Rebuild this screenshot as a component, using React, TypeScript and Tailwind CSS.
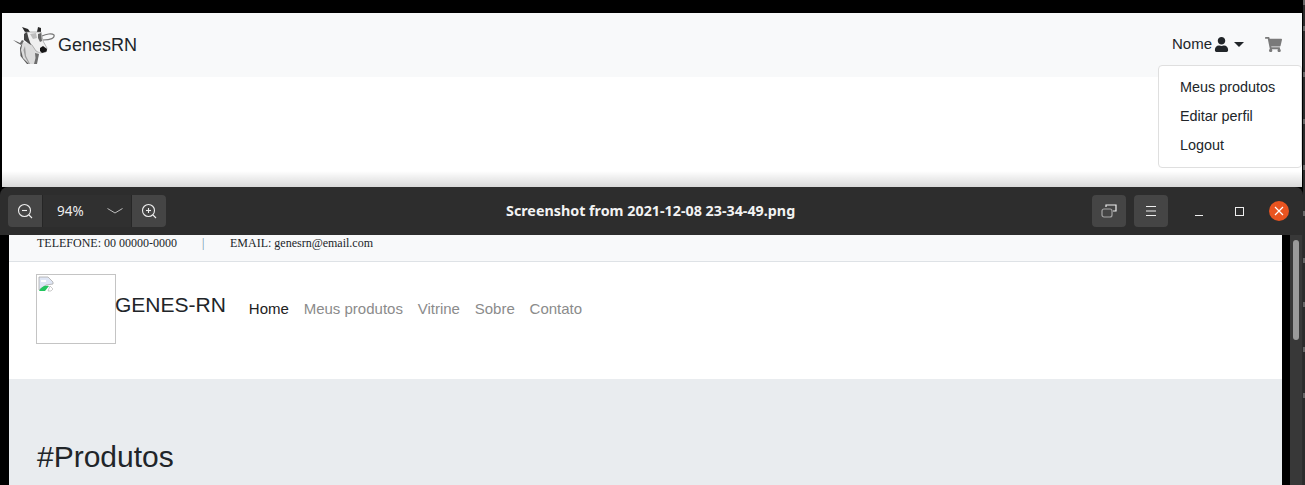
import { FaUser, FaShoppingCart } from "react-icons/fa";

const stripMarks = [26, 46, 47, 46, 46, 47, 44, 45, 46, 47];

function CowLogo() {
  return (
    <svg width="42" height="40" viewBox="0 0 42 40" className="shrink-0 blur-[0.35px]">
      {/* chifres */}
      <path d="M9 1 L15 3 L17 6 L12 6 Z" fill="#2b2b2b" />
      <path d="M25 1 L28 2 L28 7 L24 6 Z" fill="#2b2b2b" />
      {/* orelhas */}
      <path d="M0 14 C3 16 6 18 8 19 L11 15 L9 14 L7 17 C5 16 3 15 0 14 Z" fill="#666" />
      <path d="M29 10 C33 8 39 7 41 9 C42 12 38 14 30 14" fill="none" stroke="#777" strokeWidth="1.2" />
      {/* pescoço */}
      <path d="M10 16 L8 24 L10 32 L15 38 L23 38 L26 28 L20 18 Z" fill="#dcdcdc" />
      <path d="M10 15 L8 24 L10 32 L16 38 L14 38 L7.5 30 L7 22 Z" fill="#5c5c5c" />
      <path d="M12 20 L13 30 L17 38 L16 38 L12 31 L10.5 24 Z" fill="#9c9c9c" />
      <path d="M22 27 L26 28 L24 38 L21 38 L22.5 32 Z" fill="#6e6e6e" />
      {/* cabeça */}
      <path d="M12 6 L28 6 L30 15 L34 22 L33 26 L27 27 L23 25 L19 19 L14 15 Z" fill="#f0f0f0" stroke="#8a8a8a" strokeWidth="0.6" />
      <path d="M11 8 L14 6 L15.5 12 L18 19 L15 17 L11 14 Z" fill="#444444" />
      <path d="M17 8 L23 7 L24 12 L20 13 Z" fill="#bdbdbd" />
      <path d="M25 8 L28 7 L29 15 L27 16 L25 12 Z" fill="#666666" />
      <path d="M27 22 L30 20 L34 23 L33.5 25.5 L29 27 L27 25 Z" fill="#151515" />
    </svg>
  );
}

function BrokenImage() {
  return (
    <svg width="16" height="16" viewBox="0 0 16 16">
      <path d="M1 1 H10 L15 6 V8 L8 9 L1 14 Z" fill="#dfe6f5" stroke="#a9a9a9" strokeWidth="0.8" />
      <path d="M3 4 H8 V6 H3 Z" fill="#ffffff" />
      <path d="M1 15 C3 11 6 9 11 10 L7 15 Z" fill="#22c55e" />
      <path d="M12 10 L15 13 L13 15 L10 15 Z" fill="#ffffff" stroke="#a9a9a9" strokeWidth="0.6" />
    </svg>
  );
}

function ZoomIcon({ plus }: { plus?: boolean }) {
  return (
    <svg width="16" height="16" viewBox="0 0 16 16" fill="none" stroke="#eeeeee" strokeWidth="1.1">
      <circle cx="7.5" cy="7.5" r="6" />
      <path d="M12 12 L15 15" />
      <path d="M5 7.5 H10" />
      {plus && <path d="M7.5 5 V10" />}
    </svg>
  );
}

function ToolButton({ children }: { children: React.ReactNode }) {
  return (
    <div className="flex h-8 w-[34px] items-center justify-center rounded bg-[#454545]">
      {children}
    </div>
  );
}

function Viewer() {
  return (
    <div className="flex h-[298px] flex-col">
      {/* barra de título do visualizador */}
      <div className="relative flex h-[48px] shrink-0 items-center justify-between rounded-t-lg bg-[#2d2d2d] pl-2 pr-[14px] font-['Noto_Sans',sans-serif]">
        <div className="flex h-8 items-center rounded bg-[#303030]">
          <div className="flex h-8 w-[35px] items-center justify-center rounded-l border-r border-[#262626] bg-[#454545]">
            <ZoomIcon />
          </div>
          <div className="flex w-[88px] items-center pl-[14px]">
            <span className="w-[50px] text-[13.5px] text-[#eeeeee]">94%</span>
            <svg width="16" height="6" viewBox="0 0 16 6" fill="none" stroke="#bdbdbd" strokeWidth="1">
              <path d="M0.5 0.5 L8 5 L15.5 0.5" />
            </svg>
          </div>
          <div className="flex h-8 w-[35px] items-center justify-center rounded-r border-l border-[#262626] bg-[#454545]">
            <ZoomIcon plus />
          </div>
        </div>
        <span className="absolute left-[506px] text-[14.3px] font-bold text-[#f2f2f2]">
          Screenshot from 2021-12-08 23-34-49.png
        </span>
        <div className="flex items-center">
          <div className="flex gap-2">
            <ToolButton>
              <svg width="16" height="14" viewBox="0 0 16 14" fill="none" strokeWidth="1.2">
                <path d="M5 3 V1 H15 V7 H12" stroke="#eeeeee" />
                <rect x="1" y="5" width="10" height="8" rx="2" stroke="#a5a5a5" />
              </svg>
            </ToolButton>
            <ToolButton>
              <svg width="12" height="10" viewBox="0 0 12 10" stroke="#eeeeee" strokeWidth="1">
                <path d="M1 0.5 H11 M1 5 H11 M1 9.5 H11" />
              </svg>
            </ToolButton>
          </div>
          <div className="ml-[27px] mt-[8px] h-px w-2 bg-[#eeeeee]" />
          <div className="ml-[32px] h-[9px] w-[9px] border border-[#eeeeee]" />
          <div className="ml-[25px] flex h-5 w-5 items-center justify-center rounded-full bg-[#e95420]">
            <svg width="10" height="10" viewBox="0 0 10 10" stroke="#ffffff" strokeWidth="1.2">
              <path d="M1 1 L9 9 M9 1 L1 9" />
            </svg>
          </div>
        </div>
      </div>

      {/* área da imagem */}
      <div className="flex min-h-0 flex-1">
        <div className="w-[9px] shrink-0 bg-black" />
        <div className="flex w-[1273px] shrink-0 flex-col bg-white">
          <div className="flex h-[27px] shrink-0 items-start border-b border-[#dee2e6] bg-[#f8f9fa] pl-[28px] font-['Liberation_Serif',serif] text-[12px] leading-[17px] text-[#212529]">
            <span className="w-[165px]">TELEFONE: 00 00000-0000</span>
            <span className="w-[28px] text-[#6c8aa0]">|</span>
            <span>EMAIL: genesrn@email.com</span>
          </div>
          <div className="flex h-[117px] shrink-0 items-start pl-[27px] pt-[12px]">
            <div className="h-[70px] w-[80px] shrink-0 border border-[#c4c4c4] pl-px pt-px">
              <BrokenImage />
            </div>
            <span className="-ml-px mt-[17px] text-[21px] leading-[27px] text-[#212529]">GENES-RN</span>
            <nav className="ml-[23px] mt-[25px] flex gap-[14.8px] text-[15px] leading-[20px] text-[#8b8b8b]">
              <span className="text-[#212121]">Home</span>
              <span>Meus produtos</span>
              <span>Vitrine</span>
              <span>Sobre</span>
              <span>Contato</span>
            </nav>
          </div>
          <div className="flex-1 bg-[#e9ecef] pl-[28px] pt-[58px]">
            <h2 className="text-[30px] leading-[40px] text-[#212529]">#Produtos</h2>
          </div>
        </div>
        <div className="w-2 shrink-0 bg-black" />
        {/* barra de rolagem */}
        <div className="w-[12px] shrink-0 bg-[#383838] pl-[3px] pt-[5px]">
          <div className="h-[100px] w-[6px] rounded-full bg-[#9a9a9a]" />
        </div>
        <div className="flex-1 bg-[#2d2d2d]" />
      </div>
    </div>
  );
}

export default function App() {
  return (
    <div className="flex h-[485px] w-[1305px] overflow-hidden bg-black font-['Liberation_Sans',Arial,sans-serif]">
      <div className="flex w-[1303px] shrink-0 flex-col">
        <div className="h-[13px] shrink-0" />

        {/* página de trás, com o menu aberto */}
        <div className="relative ml-[2px] h-[174px] w-[1300px] shrink-0 bg-white">
          <header className="flex h-[64px] items-center justify-between bg-[#f8f9fa] pl-[11px] pr-[20px]">
            <div className="flex items-center gap-[3px] pt-px">
              <CowLogo />
              <span className="text-[18px] text-[#212529]">GenesRN</span>
            </div>
            <div className="flex items-center pb-[2px] text-[15px] text-[#212529]">
              <span>Nome</span>
              <FaUser className="ml-[2px] text-[15px]" />
              <span className="ml-[5px] h-0 w-0 border-x-[5px] border-t-[5px] border-x-transparent border-t-[#212529]" />
              <FaShoppingCart className="ml-[21px] text-[17px] text-[#7a7a7a]" />
            </div>
          </header>
          <div className="absolute left-[1156px] top-[52px] flex h-[103px] w-[144px] flex-col justify-center rounded border border-[#dfdfdf] bg-white pl-[21px] text-[14.4px] leading-[29px] text-[#212529]">
            <span>Meus produtos</span>
            <span>Editar perfil</span>
            <span>Logout</span>
          </div>
          {/* sombra da janela por cima */}
          <div className="absolute inset-x-0 bottom-0 h-[16px] bg-gradient-to-b from-transparent to-black/15" />
        </div>

        <Viewer />
      </div>

      {/* janela de trás, só a beirada aparece */}
      <div className="w-[2px] shrink-0 bg-[#2b2b2b]">
        {stripMarks.map((gap, i) => (
          <div key={i} style={{ height: gap }}>
            <div className="h-[5px] w-[2px] bg-[#666666]" />
          </div>
        ))}
      </div>
    </div>
  );
}
